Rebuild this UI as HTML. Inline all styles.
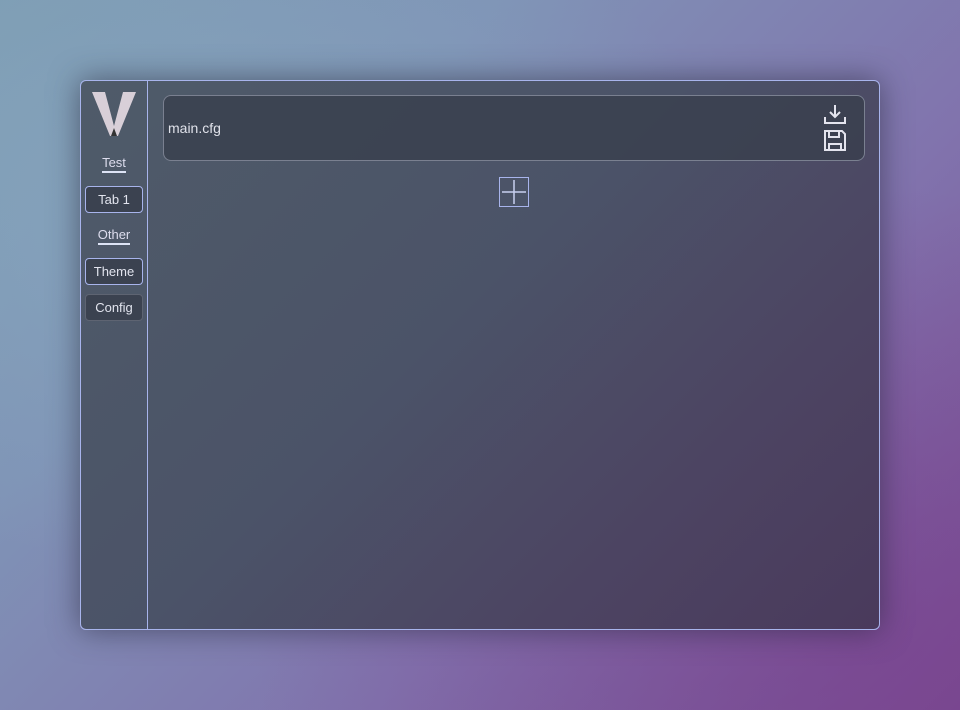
<!DOCTYPE html>
<html><head><meta charset="utf-8"><style>
html,body{margin:0;padding:0;width:960px;height:710px;overflow:hidden;font-family:"Liberation Sans","DejaVu Sans",sans-serif;}
body{background:linear-gradient(135deg,#7d9cb3 0%,#7f93b6 30%,#8173ad 65%,#7a4d92 100%);position:relative;}
.bg1{position:absolute;left:0;top:0;width:960px;height:710px;background:radial-gradient(ellipse at 20% 30%,rgba(140,175,195,.5),transparent 50%),radial-gradient(ellipse at 90% 90%,rgba(120,60,140,.5),transparent 50%);}
.win{position:absolute;left:80px;top:80px;width:798px;height:548px;border:1px solid #a8b4ec;border-radius:6px;background:linear-gradient(135deg,#4f5b69 0%,#4b5368 45%,#4c4462 75%,#4a3a5c 100%);box-shadow:0 0 30px rgba(40,40,60,.6);overflow:hidden;}
.side{position:absolute;left:0;top:0;width:66px;height:548px;border-right:1px solid #a8b4ec;}
.logo{position:absolute;left:10px;top:10px;}
.lbl{position:absolute;left:0;width:66px;text-align:center;color:#dde;font-size:13px;}
.lbl span{border-bottom:2px solid #dde3f5;padding-bottom:1px;}
.btn{position:absolute;left:4px;width:58px;height:27px;border-radius:4px;box-sizing:border-box;background:#3b4250;color:#e2e4ee;font-size:13px;text-align:center;line-height:25px;}
.file{position:absolute;left:82px;top:14px;width:702px;height:66px;border:1px solid #7a8090;border-radius:8px;background:rgba(55,62,75,.75);box-sizing:border-box;}
.file .t{position:absolute;left:4px;top:24px;color:#e0e2ea;font-size:14px;}
.plus{position:absolute;left:418px;top:96px;width:30px;height:30px;border:1px solid #a8b4ec;box-sizing:border-box;}
</style></head><body><div class="bg1"></div>
<div class="win">
 <div class="side">
  <svg class="logo" width="46" height="46" viewBox="0 0 46 46"><path d="M1 1h13l9 34 9-34h13L27 45h-8z" fill="#d8cfd8"/><path d="M20 45l3-8 3 8z" fill="#333"/></svg>
  <div class="lbl" style="top:74px"><span>Test</span></div>
  <div class="btn" style="top:105px;border:1px solid #a8b4ec">Tab 1</div>
  <div class="lbl" style="top:146px"><span>Other</span></div>
  <div class="btn" style="top:177px;border:1px solid #a8b4ec">Theme</div>
  <div class="btn" style="top:213px;border:1px solid #5e6472">Config</div>
 </div>
 <div class="file"><div class="t">main.cfg</div>
  <svg style="position:absolute;left:659px;top:8px" width="24" height="50" viewBox="0 0 24 50" fill="none" stroke="#e4e4ee" stroke-width="2"><path d="M12 1v12M7 8l5 5 5-5M2 13v6h20v-6"/><path d="M2 27h17l3 3v16H2z"/><path d="M6 27v6h10v-6M6 46v-6h12v6"/></svg>
 </div>
 <div class="plus"><svg width="28" height="28" viewBox="0 0 28 28"><path d="M14 2v24M2 14h24" stroke="#c8d0f0" stroke-width="1.5"/></svg></div>
</div>
</body></html>
